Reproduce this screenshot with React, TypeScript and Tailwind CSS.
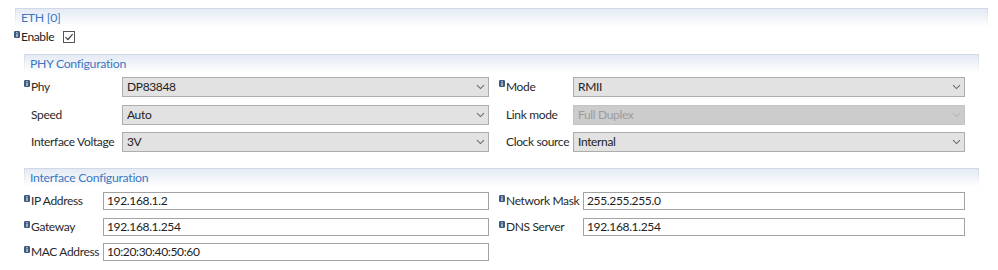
import React from "react";

const font = { fontFamily: 'Lato, "Noto Sans", "Liberation Sans", sans-serif' };

function Info() {
  return (
    <svg width="6" height="7" viewBox="0 0 6 7" className="shrink-0 self-start mt-[1px]">
      <rect x="0" y="0" width="6" height="7" rx="1.2" fill="#3d5a80" />
      <rect x="2.5" y="1" width="1" height="1" fill="#ffffff" />
      <rect x="2.5" y="2.6" width="1" height="3.4" fill="#ffffff" />
    </svg>
  );
}

function Chevron({ disabled }: { disabled?: boolean }) {
  return (
    <svg width="9" height="6" viewBox="0 0 9 6" className="shrink-0">
      <path d="M1 1.2 L4.5 4.6 L8 1.2" fill="none" stroke={disabled ? "#b8b8b8" : "#6a6a6a"} strokeWidth="1.1" />
    </svg>
  );
}

function SectionHeader({ title, className }: { title: string; className?: string }) {
  return (
    <div className={"bg-gradient-to-b from-[#cfd8e5] to-[#ffffff] pt-[1px] px-[1px] " + (className ?? "")}>
      <div className="h-[18px] bg-gradient-to-b from-[#e4eaf4] to-[#ffffff] flex items-center pl-[5px] text-[12.3px] tracking-[-0.3px] text-[#3a78c2] whitespace-nowrap">
        {title}
      </div>
    </div>
  );
}

function Label({ text, info, width }: { text: string; info?: boolean; width: number }) {
  return (
    <div className="flex items-center shrink-0 text-[12px] tracking-[-0.35px] text-[#2a2a2a] h-full whitespace-nowrap" style={{ width }}>
      <div className="w-[6px] flex shrink-0 self-stretch items-start pt-[2px]">{info ? <Info /> : null}</div>
      <span className="pl-[1px]">{text}</span>
    </div>
  );
}

function Select({ value, width, disabled }: { value: string; width: number; disabled?: boolean }) {
  return (
    <div
      className={
        "h-[20px] flex items-center justify-between pl-[4px] pr-[3px] border text-[12px] tracking-[-0.35px] shrink-0 whitespace-nowrap " +
        (disabled ? "bg-[#cccccc] border-[#c4c4c4] text-[#9c9c9c]" : "bg-[#e2e2e2] border-[#adadad] text-[#222222]")
      }
      style={{ width }}
    >
      <span>{value}</span>
      <Chevron disabled={disabled} />
    </div>
  );
}

function Input({ value, width }: { value: string; width: number }) {
  return (
    <div
      className="h-[18px] flex items-center pl-[3px] border border-[#a3a3a3] bg-white text-[12px] tracking-[-0.35px] text-[#222222] shrink-0 whitespace-nowrap"
      style={{ width }}
    >
      {value}
    </div>
  );
}

function SelectRow({ l, r }: { l: { label: string; info?: boolean; value: string }; r: { label: string; info?: boolean; value: string; disabled?: boolean } }) {
  return (
    <div className="flex items-center h-[20px]">
      <Label text={l.label} info={l.info} width={98} />
      <Select value={l.value} width={367} />
      <div className="w-[10px] shrink-0" />
      <Label text={r.label} info={r.info} width={74} />
      <Select value={r.value} width={392} disabled={r.disabled} />
    </div>
  );
}

function InputRow({ l, r }: { l: { label: string; value: string }; r?: { label: string; value: string } }) {
  return (
    <div className="flex items-center h-[18px]">
      <Label text={l.label} info width={79} />
      <Input value={l.value} width={386} />
      {r ? (
        <>
          <div className="w-[10px] shrink-0" />
          <Label text={r.label} info width={84} />
          <Input value={r.value} width={382} />
        </>
      ) : null}
    </div>
  );
}

export default function App() {
  return (
    <div className="w-[998px] h-[270px] bg-white overflow-hidden flex flex-col" style={font}>
      <SectionHeader title="ETH [0]" className="ml-[15px] mr-[10px] mt-[8px]" />
      <div className="flex items-center ml-[14px] mt-[3px] h-[13px]">
        <div className="w-[6px] self-stretch flex items-start"><Info /></div>
        <span className="text-[12px] tracking-[-0.35px] text-[#222222] ml-[1px]">Enable</span>
        <div className="ml-[9px] w-[12px] h-[12px] border border-[#555555] bg-white flex items-center justify-center">
          <svg width="10" height="10" viewBox="0 0 10 10">
            <path d="M1.5 5.2 L4 7.6 L8.6 2.2" fill="none" stroke="#333333" strokeWidth="1.1" />
          </svg>
        </div>
      </div>
      <div className="ml-[24px] mr-[19px] mt-[11px] flex flex-col">
        <SectionHeader title="PHY Configuration" />
        <div className="flex flex-col gap-[7.5px] mt-[4px]">
          <SelectRow l={{ label: "Phy", info: true, value: "DP83848" }} r={{ label: "Mode", info: true, value: "RMII" }} />
          <SelectRow l={{ label: "Speed", value: "Auto" }} r={{ label: "Link mode", value: "Full Duplex", disabled: true }} />
          <SelectRow l={{ label: "Interface Voltage", value: "3V" }} r={{ label: "Clock source", value: "Internal" }} />
        </div>
        <SectionHeader title="Interface Configuration" className="mt-[16px]" />
        <div className="flex flex-col gap-[7.5px] mt-[5px]">
          <InputRow l={{ label: "IP Address", value: "192.168.1.2" }} r={{ label: "Network Mask", value: "255.255.255.0" }} />
          <InputRow l={{ label: "Gateway", value: "192.168.1.254" }} r={{ label: "DNS Server", value: "192.168.1.254" }} />
          <InputRow l={{ label: "MAC Address", value: "10:20:30:40:50:60" }} />
        </div>
      </div>
    </div>
  );
}
